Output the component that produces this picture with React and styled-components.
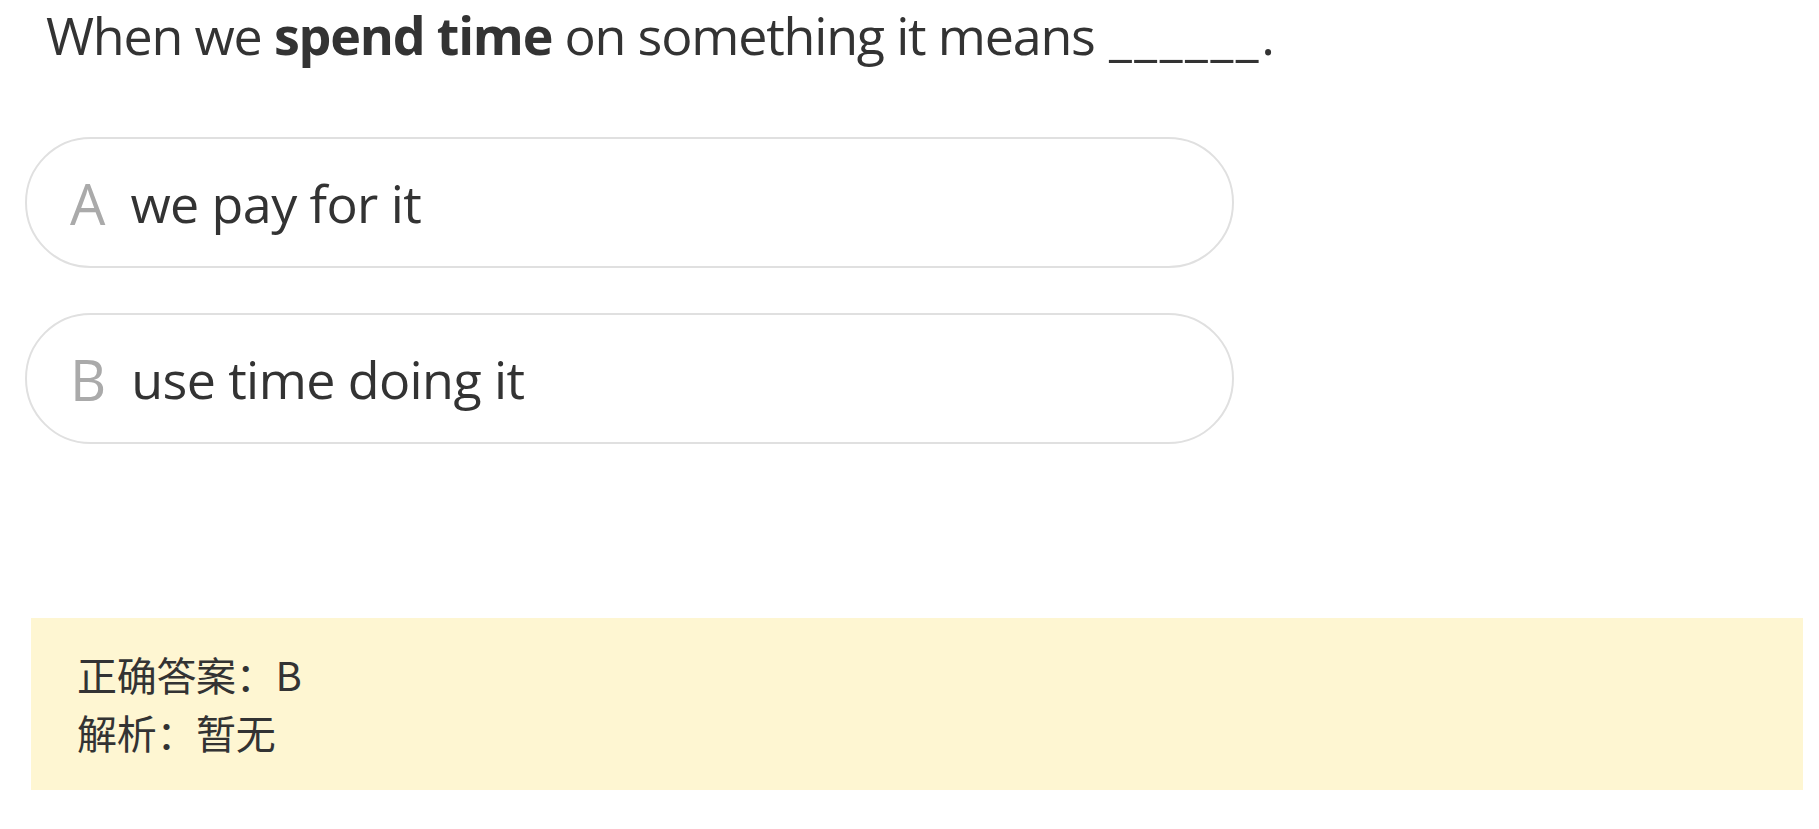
import React from "react";
import styled, { createGlobalStyle } from "styled-components";

const Global = createGlobalStyle`
  html, body { margin: 0; padding: 0; background: #fff; }
  body { font-family: "Open Sans", "Noto Sans CJK SC", sans-serif; color: #333; }
`;

const Page = styled.div`
  display: flex;
  flex-direction: column;
  padding: 0 16px 40px 25px;
`;

const Question = styled.p`
  margin: 0;
  padding-left: 21px;
  font-size: 52px;
  line-height: 70px;
  color: #333;
  letter-spacing: -1.2px;
  b { font-weight: 700; }
`;

const Blank = styled.span`
  letter-spacing: 2.6px;
  margin-left: 2px;
`;

const Options = styled.div`
  display: flex;
  flex-direction: column;
  gap: 45px;
  width: 1209px;
  margin-top: 67px;
`;

const Option = styled.div`
  box-sizing: border-box;
  height: 131px;
  border: 2px solid #e0e0e0;
  border-radius: 66px;
  display: flex;
  align-items: center;
  padding-left: 43px;
  gap: 25px;
`;

const Letter = styled.span`
  font-size: 56px;
  color: #aaa;
  line-height: 1;
`;

const OptText = styled.span`
  font-size: 52px;
  color: #333;
  line-height: 1;
  letter-spacing: -0.6px;
`;

const Answer = styled.div`
  margin-top: 174px;
  margin-left: 6px;
  background: #fef6d2;
  padding: 27px 46px 29px;
  font-family: "Noto Sans CJK SC", sans-serif;
  font-size: 40px;
  line-height: 58px;
  color: #333;
`;

const Line = styled.div`
  letter-spacing: -0.3px;
`;

const options = [
  { key: "A", text: "we pay for it" },
  { key: "B", text: "use time doing it" },
];

export default function App() {
  return (
    <>
      <Global />
      <Page>
        <Question>
          When we <b>spend time</b> on something it means <Blank>______</Blank>.
        </Question>
        <Options>
          {options.map((o) => (
            <Option key={o.key}>
              <Letter>{o.key}</Letter>
              <OptText>{o.text}</OptText>
            </Option>
          ))}
        </Options>
        <Answer>
          <Line>正确答案：B</Line>
          <Line>解析：暂无</Line>
        </Answer>
      </Page>
    </>
  );
}
